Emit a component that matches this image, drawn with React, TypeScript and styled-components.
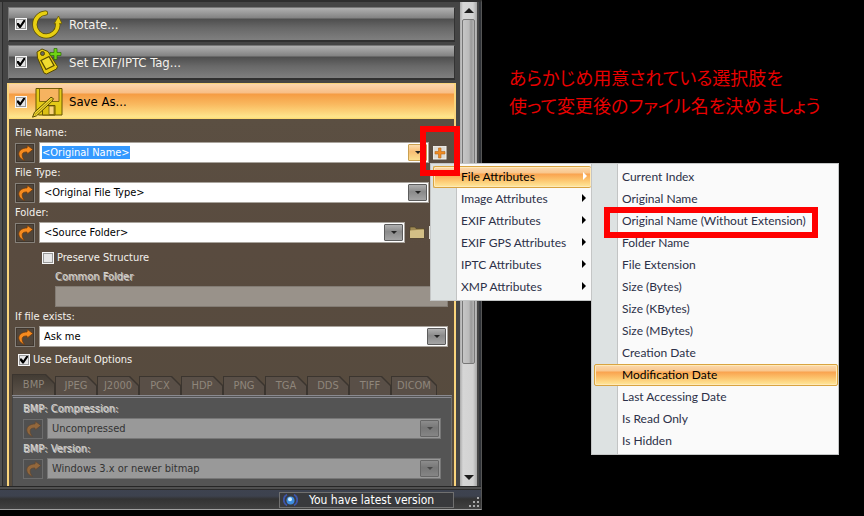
import React, { useEffect, useId, useRef } from "react";
import styled, { createGlobalStyle, css } from "styled-components";

const uiFont = `"DejaVu Sans Condensed", "Noto Sans", sans-serif`;
const menuFont = `Lato, "Open Sans", sans-serif`;

const GlobalStyle = createGlobalStyle`
  *, *::before, *::after { box-sizing: border-box; }
  body { margin: 0; background: #000; font: 11px/19px ${uiFont}; color: #f4f1ec; }
  button, input, select { font: inherit; color: inherit; margin: 0; padding: 0; border: 0; border-radius: 0; }
  ul { list-style: none; margin: 0; padding: 0; }
`;

const Page = styled.main`
  display: grid;
  grid-template-columns: 241fr 191fr;
  align-items: start;
  min-height: 100vh;
  background: #000;
`;

const Window = styled.section`
  border-top: 2px solid #2e2e2e;
  background: #454545;
  border-bottom: 1px solid #a0a0a0;
  border-right: 1px solid #555;
`;

const Content = styled.div`
  display: flex;
  gap: 4px;
  padding: 0 4px 0 2px;
  box-shadow: inset 2px 0 #505050, inset 3px 0 #2c2c2c, inset -2px 0 #303338;
`;

const ActionList = styled.div`
  flex: 1;
  min-width: 0;
  display: flex;
  flex-direction: column;
  gap: 3px;
  padding: 5px 0 0 5px;
`;

const headerOpen = css`
  height: 35px;
  padding-left: 6px;
  color: #000;
  background: linear-gradient(#fbd5ad 0, #f8be85 9px, #f59c43 10px, #f9b85e 20px, #ffe68c 33px, #fdd86a);
`;

const headerClosed = css`
  height: 35px;
  margin: 0 1px;
  padding-left: 6px;
  border: 1px solid #777;
  border-bottom: 2px solid #303030;
  border-right-color: #333;
  background: linear-gradient(#b0b0b0 0, #828282 10px, #4e4e4e 11px, #686868 20px, #7f7f7f 32px);
`;

const Header = styled.div<{ $open?: boolean }>`
  display: flex;
  align-items: center;
  font-size: 13px;
  ${(p) => (p.$open ? headerOpen : headerClosed)}
`;

const HeaderLabel = styled.label`
  display: grid;
  grid-template-columns: 12px 32px auto;
  align-items: center;
  gap: 5px;
`;

const Tick = styled.input.attrs({ type: "checkbox" })`
  appearance: none;
  flex: none;
  width: 12px;
  height: 12px;
  border: 1px solid #f8f8f8;
  background: #e6e6e6;
  box-shadow: inset 0 0 0 1px #999;
  display: grid;
  &:checked::after {
    content: "";
    margin: 1px;
    background: #000;
    clip-path: polygon(0 38%, 22% 38%, 40% 62%, 82% 0, 100% 0, 100% 22%, 46% 100%, 30% 100%, 0 62%);
  }
`;

const OpenAction = styled.section`
  border: solid #f9d47c;
  border-width: 1px 2px 0;
`;

const Form = styled.div`
  display: flex;
  flex-direction: column;
  padding: 4px 0 0;
  background: linear-gradient(#5b4f42, #594b3f 130px, #554b3e);
`;

const FormRows = styled.div`
  padding: 0 6px;
`;

const Caption = styled.label<{ $emboss?: boolean }>`
  display: block;
  height: 19px;
  white-space: nowrap;
  ${(p) => p.$emboss && css`color: #d8d5cf; text-shadow: 1px 1px #fff9;`}
`;

const Row = styled.div<{ $inset?: boolean }>`
  display: flex;
  align-items: center;
  gap: 4px;
  height: 21px;
  padding-right: ${(p) => (p.$inset ? "19px" : "0")};
`;

const ResetButton = styled.button`
  display: grid;
  place-items: center;
  flex: none;
  width: 20px;
  height: 20px;
  border: 1px solid #858079;
  background: #51463b;
  box-shadow: inset 0 0 0 1px #40372e;
  &:disabled { background: #505050; border-color: #6c6c6c; box-shadow: none; }
  &:disabled svg { opacity: 0.4; }
`;

const Combo = styled.div<{ $disabled?: boolean }>`
  flex: 1;
  min-width: 0;
  display: grid;
  grid-template-columns: minmax(0, 1fr) 19px;
  height: 21px;
  padding: 1px;
  border: 1px solid ${(p) => (p.$disabled ? "#777" : "#a9a49d")};
  background: ${(p) => (p.$disabled ? "#999" : "#fff")};
  color: ${(p) => (p.$disabled ? "#333" : "#000")};
`;

const Select = styled.select`
  grid-area: 1 / 1 / 2 / 3;
  appearance: none;
  width: 100%;
  height: 17px;
  line-height: 17px;
  padding-left: 3px;
  background: transparent;
  outline: 0;
  &:disabled { color: inherit; opacity: 1; }
`;

const TextBox = styled.input`
  width: 100%;
  height: 17px;
  line-height: 15px;
  padding-left: 1px;
  background: transparent;
  outline: 0;
  &::selection { background: rgba(51, 153, 255, 0.996); color: #fff; }
`;

const arrowSkin = css<{ $tone?: "hot" | "off" }>`
  display: grid;
  place-items: center;
  align-self: stretch;
  border: 1px solid ${(p) => (p.$tone === "hot" ? "#c9a050" : p.$tone === "off" ? "#666" : "#5c5c5c")};
  border-radius: 1px;
  background: ${(p) =>
    p.$tone === "hot"
      ? "linear-gradient(#fbdcae, #f8be74 45%, #fcdf90)"
      : p.$tone === "off"
        ? "linear-gradient(#8c8c8c, #777 45%, #858585)"
        : "linear-gradient(#b0b0b0, #8a8a8a 45%, #a4a4a4)"};
  &::after {
    content: "";
    border: solid transparent;
    border-width: 3px 3px 0;
    border-top-color: ${(p) => (p.$tone === "off" ? "#484848" : "#222")};
  }
`;

const ArrowFace = styled.span<{ $tone?: "hot" | "off" }>`
  ${arrowSkin}
  grid-area: 1 / 2;
  pointer-events: none;
`;

const ArrowButton = styled.button<{ $tone?: "hot" | "off" }>`
  ${arrowSkin}
`;

const AddAnchor = styled.div`
  position: relative;
  flex: none;
  width: 15px;
  height: 15px;
`;

const IconButton = styled.button<{ $wide?: boolean }>`
  display: grid;
  align-items: center;
  justify-items: start;
  flex: none;
  width: ${(p) => (p.$wide ? "19px" : "16px")};
  height: 15px;
  background: transparent;
`;

const CheckRow = styled.label<{ $nested?: boolean }>`
  display: flex;
  align-items: center;
  gap: 3px;
  height: ${(p) => (p.$nested ? "24px" : "25px")};
  padding: ${(p) => (p.$nested ? "5px 0 0 27px" : "0 0 0 3px")};
`;

const Indent = styled.div`
  padding-left: 40px;
`;

const DisabledBox = styled.input`
  display: block;
  width: 100%;
  height: 21px;
  border: 1px solid #837c74;
  background: #99928a;
`;

const Tabs = styled.div`
  display: flex;
  align-items: flex-end;
  height: 23px;
  padding: 0 3px;
`;

const Tab = styled.button<{ $active?: boolean }>`
  position: relative;
  flex: none;
  width: ${(p) => (p.$active ? "43px" : "42px")};
  height: ${(p) => (p.$active ? "21px" : "19px")};
  line-height: 18px;
  color: #8f867b;
  background: #3b352f;
  clip-path: polygon(0 0, calc(100% - 9px) 0, 100% 9px, 100% 100%, 0 100%);
  isolation: isolate;
  &::before {
    content: "";
    position: absolute;
    z-index: -1;
    inset: 1px 1px 0 1px;
    background: ${(p) => (p.$active ? "linear-gradient(#433c34, #5b5249)" : "#594f47")};
    clip-path: polygon(0 0, calc(100% - 9px) 0, 100% 9px, 100% 100%, 0 100%);
  }
  &:last-child { width: 46px; }
`;

const Panel = styled.div`
  margin: 0 2px 0 3px;
  padding: 1px 10px 7px;
  border-top: 3px double #8a8a90;
  border-left: 1px solid #444;
  border-right: 1px solid #6e6e6e;
  background: #545454;
`;

const ScrollTrack = styled.div`
  flex: none;
  display: flex;
  flex-direction: column;
  align-items: stretch;
  width: 17px;
  background: linear-gradient(90deg, #aaa, #d6d6d6 3px, #d2d2d2 13px, #a8a8a8);
`;

const ScrollButton = styled.button<{ $down?: boolean }>`
  height: 17px;
  background: transparent;
  display: grid;
  place-items: center;
  &::after {
    content: "";
    border: solid transparent;
    border-width: ${(p) => (p.$down ? "5px 5px 0" : "0 5px 5px")};
    border-top-color: ${(p) => (p.$down ? "#1c1c1c" : "transparent")};
    border-bottom-color: ${(p) => (p.$down ? "transparent" : "#1c1c1c")};
  }
`;

const ScrollLane = styled.div`
  flex: 1;
  display: grid;
  grid-template-rows: 345fr 105fr;
  padding: 0 2px;
`;

const Thumb = styled.div`
  border: 1px solid #777;
  border-radius: 2px;
  background: linear-gradient(90deg, #c6c6c6, #bababa 6px, #999 8px, #b4b4b4);
`;

const StatusBar = styled.footer`
  display: flex;
  justify-content: flex-end;
  align-items: flex-end;
  gap: 15px;
  height: 23px;
  padding: 0 1px 1px 0;
  border-top: 1px solid #262626;
  box-shadow: inset 0 2px #505050, inset 0 3px #2c2c2c;
  background: linear-gradient(#3e4350 0, #3d424e 9px, #333 12px, #414141);
`;

const StatusItem = styled.div`
  display: flex;
  align-items: center;
  gap: 11px;
  width: 175px;
  height: 16px;
  padding-left: 3px;
  border: 1px solid #707070;
  background: #393a3d;
  font-size: 12px;
  color: #fff;
  white-space: nowrap;
`;

const Menu = styled.ul<{ $sub?: boolean }>`
  position: absolute;
  z-index: ${(p) => (p.$sub ? 3 : 2)};
  top: ${(p) => (p.$sub ? "-3px" : "18px")};
  left: ${(p) => (p.$sub ? "100%" : "-3px")};
  width: ${(p) => (p.$sub ? "248px" : "161px")};
  padding: 2px 0 2px 2px;
  border: 1px solid #c4c6c6;
  border-right-width: ${(p) => (p.$sub ? "1px" : "0")};
  background: linear-gradient(90deg, #dde2e2 25px, #c2c4c4 25px, #c2c4c4 26px, #fafafa 26px);
  color: #2c3048;
  font: 12px/22px ${menuFont};
`;

const MenuEntry = styled.li`
  position: relative;
`;

const MenuButton = styled.button<{ $hot?: boolean; $parent?: boolean }>`
  display: flex;
  align-items: center;
  justify-content: space-between;
  width: 100%;
  height: 22px;
  padding: 0 4px 0 27px;
  border: 1px solid transparent;
  text-align: left;
  white-space: nowrap;
  background: transparent;
  ${(p) =>
    p.$hot &&
    css`
      color: #000;
      border-color: #d9a441;
      border-right-width: ${p.$parent ? "0" : "1px"};
      border-radius: 2px;
      box-shadow: inset 0 0 0 1px #ffe9b8;
      background: linear-gradient(#fbd9ae 0, #f9c68c 6px, #f9a34f 7px, #fcc46d 13px, #ffe99c);
    `}
  &::after {
    content: "";
    display: ${(p) => (p.$parent ? "block" : "none")};
    border: solid transparent;
    border-width: 4px 0 4px 4px;
    border-left-color: ${(p) => (p.$hot ? "#fff" : "#000")};
    margin-bottom: 3px;
  }
`;

const Callout = styled.span<{ $target: "button" | "entry" }>`
  position: absolute;
  z-index: 5;
  pointer-events: none;
  border: 6px solid #f00;
  ${(p) =>
    p.$target === "button"
      ? css`top: -19px; left: -13px; width: 40px; height: 50px;`
      : css`top: -3px; left: 10px; width: 214px; height: 31px;`}
`;

const Note = styled.p`
  margin: 0;
  padding: 63px 0 0 27px;
  color: #e80000;
  font: 400 18px/28px "Noto Sans CJK JP", sans-serif;
  font-feature-settings: "palt";
  white-space: nowrap;
`;

const ResetIcon = () => (
  <svg width="16" height="16" viewBox="0 0 16 16" aria-hidden="true">
    <path d="M7.500 15.500C2.500 14 .2 9 3 5.500C5 3.300 8.500 3 10 3L10.500 .5L15.800 4.500L10.200 9L10 7C7.500 6.800 5.600 7.500 5.200 9.400C4.900 11.500 6 13.700 7.500 15.500Z" fill="#f58a1f" stroke="#713a08" strokeWidth=".7" />
  </svg>
);

const RotateIcon = () => (
  <svg width="30" height="32" viewBox="0 0 30 32" aria-hidden="true">
    <path d="M13.500 5A11.500 11.500 0 1 0 25.800 17" fill="none" stroke="#5c5000" strokeWidth="5" strokeLinecap="round" />
    <path d="M22 16L26.500 8L30 15.800L27.500 15.500V18H23.600V15.500Z" fill="#e8cf12" stroke="#5c5000" strokeWidth=".7" />
    <path d="M13.500 5A11.500 11.500 0 1 0 25.800 17" fill="none" stroke="#e8cf12" strokeWidth="3.600" strokeLinecap="round" />
  </svg>
);

const TagIcon = () => (
  <svg width="30" height="32" viewBox="0 0 30 32" aria-hidden="true">
    <path d="M5 6L10 3L16 5.500L25.500 20.500L24.500 23L14.500 28L12 27L5.500 12Z" fill="#e8cc12" stroke="#584b00" />
    <path d="M9 14.500L17 10.500L22 19.500L14 23.500Z" fill="#f0dc30" stroke="#584b00" strokeWidth="1.300" />
    <circle cx="10.500" cy="7.500" r="2" fill="#666" stroke="#584b00" />
    <path d="M22 2.500H25V6.500H29V9.500H25V13.500H22V9.500H18V6.500H22Z" fill="#6fd414" stroke="#2b6c05" strokeWidth=".7" />
  </svg>
);

const SaveIcon = () => (
  <svg width="32" height="32" viewBox="0 0 32 32" aria-hidden="true">
    <path d="M4 2.500H30V29H6.500L4 26.500Z" fill="#e4cb18" stroke="#665400" />
    <path d="M7.500 2.500H27V15.500H7.500Z" fill="#f6b360" stroke="#665400" strokeWidth=".8" />
    <path d="M10.500 19.500H23V29H10.500Z" fill="#dcc014" stroke="#665400" />
    <path d="M17 20H22V28.500H17Z" fill="#fad27a" stroke="#665400" strokeWidth=".7" />
    <path d="M.5 31.200L2.500 26.200L19 11.200L21.500 12.700L19.800 15.500L4.500 29.800Z" fill="#ecd431" stroke="#584900" />
    <path d="M3 28.500L19.500 13.500" stroke="#8a7400" strokeWidth=".7" />
  </svg>
);

const PlusIcon = () => (
  <svg width="14" height="14" viewBox="0 0 14 14" aria-hidden="true">
    <rect width="13" height="13" fill="#dedbd4" stroke="#f6f4f0" />
    <path d="M5.500 2H8V5.500H12V8H8V12H5.500V8H2V5.500H5.500Z" fill="#f08a22" stroke="#b8681a" strokeWidth=".6" />
  </svg>
);

const FolderIcon = () => (
  <svg width="16" height="13" viewBox="0 0 16 13" aria-hidden="true">
    <path d="M1 1H6L7 2.500H15V12H1Z" fill="#a08a54" stroke="#51452a" strokeWidth=".7" />
    <path d="M1 4.500L15 3.500V12H1Z" fill="#d3bf86" />
  </svg>
);

const PageIcon = () => (
  <svg width="17" height="13" viewBox="0 0 17 13" aria-hidden="true">
    <rect width="13" height="13" fill="#dedbd4" />
  </svg>
);

const UpdateIcon = () => (
  <svg width="15" height="14" viewBox="0 0 15 14" aria-hidden="true">
    <path d="M4 1.500A6.300 6.300 0 0 0 4 12.500M11 1.500A6.300 6.300 0 0 1 11 12.500" fill="none" stroke="#3d55a8" strokeWidth="1.800" />
    <circle cx="7.500" cy="7.500" r="4" fill="#3f8ee0" />
    <circle cx="7" cy="6.300" r="2" fill="#c9ecff" />
  </svg>
);

const GripIcon = () => (
  <svg width="11" height="11" viewBox="0 0 11 11" fill="#aaa" aria-hidden="true">
    <path d="M8 0h2v2H8zM8 4h2v2H8zM4 4h2v2H4zM8 8h2v2H8zM4 8h2v2H4zM0 8h2v2H0z" />
  </svg>
);

function Reset({ disabled }: { disabled?: boolean }) {
  return <ResetButton type="button" aria-label="Reset" disabled={disabled}><ResetIcon /></ResetButton>;
}

type DropFieldProps = { label: string; value: string; inset?: boolean; disabled?: boolean; children?: React.ReactNode };

function DropField({ label, value, inset, disabled, children }: DropFieldProps) {
  const id = useId();
  return (
    <div>
      <Caption htmlFor={id} $emboss={disabled}>{label}</Caption>
      <Row $inset={inset}>
        <Reset disabled={disabled} />
        <Combo $disabled={disabled}>
          <Select id={id} disabled={disabled} defaultValue={value}><option>{value}</option></Select>
          <ArrowFace $tone={disabled ? "off" : undefined} />
        </Combo>
        {children}
      </Row>
    </div>
  );
}

const groups = ["File Attributes", "Image Attributes", "EXIF Attributes", "EXIF GPS Attributes", "IPTC Attributes", "XMP Attributes"];
const attributes = [
  "Current Index", "Original Name", "Original Name (Without Extension)", "Folder Name", "File Extension",
  "Size (Bytes)", "Size (KBytes)", "Size (MBytes)", "Creation Date", "Modification Date",
  "Last Accessing Date", "Is Read Only", "Is Hidden",
];
const formats = ["BMP", "JPEG", "J2000", "PCX", "HDP", "PNG", "TGA", "DDS", "TIFF", "DICOM"];

function AttributeMenu() {
  return (
    <Menu>
      {groups.map((group, i) => (
        <MenuEntry key={group}>
          <MenuButton type="button" $parent $hot={i === 0}>{group}</MenuButton>
          {i === 0 && (
            <Menu $sub>
              {attributes.map((name) => (
                <MenuEntry key={name}>
                  <MenuButton type="button" $hot={name === "Modification Date"}>{name}</MenuButton>
                  {name.includes("Without") && <Callout $target="entry" />}
                </MenuEntry>
              ))}
            </Menu>
          )}
        </MenuEntry>
      ))}
    </Menu>
  );
}

function FileNameField() {
  const id = useId();
  const box = useRef<HTMLInputElement>(null);
  useEffect(() => {
    box.current?.focus();
    box.current?.select();
  }, []);
  return (
    <div>
      <Caption htmlFor={id}>File Name:</Caption>
      <Row>
        <Reset />
        <Combo>
          <TextBox id={id} ref={box} defaultValue="<Original Name>" />
          <ArrowButton type="button" $tone="hot" aria-label="Show names" />
        </Combo>
        <AddAnchor>
          <IconButton type="button" aria-label="Insert attribute"><PlusIcon /></IconButton>
          <AttributeMenu />
          <Callout $target="button" />
        </AddAnchor>
      </Row>
    </div>
  );
}

function ActionHeader({ title, icon, open }: { title: string; icon: React.ReactNode; open?: boolean }) {
  return (
    <Header $open={open}>
      <HeaderLabel><Tick defaultChecked />{icon}<span>{title}</span></HeaderLabel>
    </Header>
  );
}

export default function App() {
  const folderId = useId();
  return (
    <>
      <GlobalStyle />
      <Page>
        <Window>
          <Content>
            <ActionList>
              <ActionHeader title="Rotate..." icon={<RotateIcon />} />
              <ActionHeader title="Set EXIF/IPTC Tag..." icon={<TagIcon />} />
              <OpenAction>
                <ActionHeader title="Save As..." icon={<SaveIcon />} open />
                <Form>
                  <FormRows>
                    <FileNameField />
                    <DropField label="File Type:" value="<Original File Type>" inset />
                    <DropField label="Folder:" value="<Source Folder>">
                      <IconButton type="button" aria-label="Browse"><FolderIcon /></IconButton>
                      <IconButton type="button" $wide aria-label="Insert folder"><PageIcon /></IconButton>
                    </DropField>
                    <CheckRow $nested><Tick />Preserve Structure</CheckRow>
                    <Indent>
                      <Caption htmlFor={folderId} $emboss>Common Folder</Caption>
                      <DisabledBox id={folderId} disabled />
                    </Indent>
                    <DropField label="If file exists:" value="Ask me" />
                    <CheckRow><Tick defaultChecked />Use Default Options</CheckRow>
                  </FormRows>
                  <Tabs role="tablist">
                    {formats.map((name, i) => (
                      <Tab key={name} type="button" role="tab" aria-selected={i === 0} $active={i === 0}>{name}</Tab>
                    ))}
                  </Tabs>
                  <Panel>
                    <DropField label="BMP: Compression:" value="Uncompressed" disabled />
                    <DropField label="BMP: Version:" value="Windows 3.x or newer bitmap" disabled />
                  </Panel>
                </Form>
              </OpenAction>
            </ActionList>
            <ScrollTrack>
              <ScrollButton type="button" aria-label="Scroll up" />
              <ScrollLane><Thumb /></ScrollLane>
              <ScrollButton type="button" $down aria-label="Scroll down" />
            </ScrollTrack>
          </Content>
          <StatusBar>
            <StatusItem><UpdateIcon />You have latest version</StatusItem>
            <GripIcon />
          </StatusBar>
        </Window>
        <Note lang="ja">
          あらかじめ用意されている選択肢を<br />
          使って変更後のファイル名を決めましょう
        </Note>
      </Page>
    </>
  );
}
